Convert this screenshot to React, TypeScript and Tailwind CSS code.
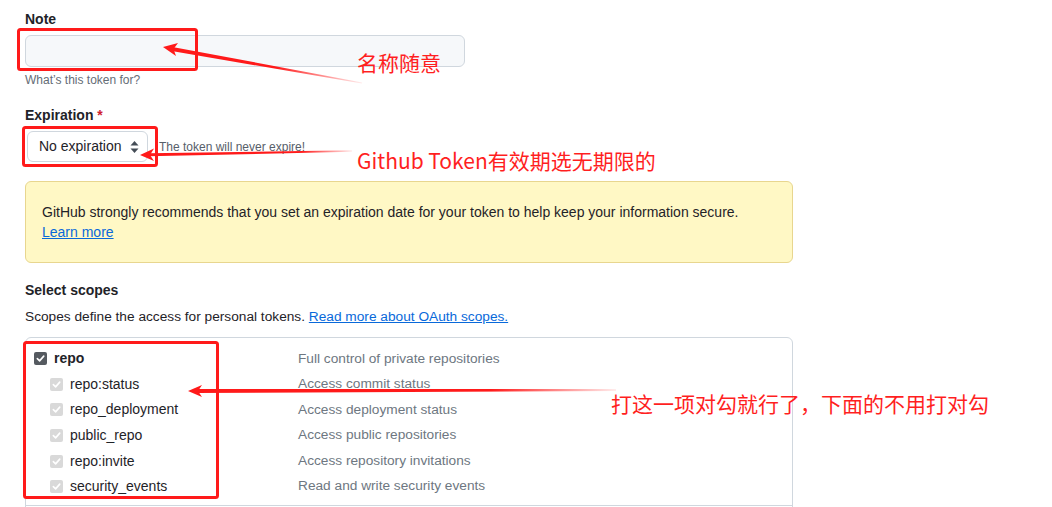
import React from "react";

const scopes = [
  { name: "repo", desc: "Full control of private repositories", main: true },
  { name: "repo:status", desc: "Access commit status" },
  { name: "repo_deployment", desc: "Access deployment status" },
  { name: "public_repo", desc: "Access public repositories" },
  { name: "repo:invite", desc: "Access repository invitations" },
  { name: "security_events", desc: "Read and write security events" },
];

function Check({ main }: { main?: boolean }) {
  return (
    <span
      className={
        main
          ? "flex h-[13px] w-[13px] items-center justify-center rounded-[2px] bg-[#555a60]"
          : "flex h-[13px] w-[13px] items-center justify-center rounded-[2px] bg-[#d9d9d9]"
      }
    >
      <svg width="9" height="9" viewBox="0 0 10 10">
        <path d="M1.5 5.2 L4 7.6 L8.6 2.4" fill="none" stroke="#fff" strokeWidth="1.8" strokeLinecap="round" strokeLinejoin="round" />
      </svg>
    </span>
  );
}

export default function App() {
  return (
    <div className="relative h-[507px] w-[1052px] overflow-hidden bg-white font-['Liberation_Sans',Arial,sans-serif] text-[#1f2328]">
      <div className="pl-[25px] pt-[9px]">
        <div className="text-[14px] font-bold leading-[20px]">Note</div>
        <div className="mt-[6px] h-[32px] w-[440px] rounded-[6px] border border-[#d0d7de] bg-[#f6f8fa]" />
        <div className="mt-[4px] text-[12px] leading-[18px] text-[#656d76]">What’s this token for?</div>

        <div className="mt-[16px] text-[14px] font-bold leading-[20px]">
          Expiration <span className="text-[#cf222e]">*</span>
        </div>
        <div className="mt-[6px] flex items-center">
          <div className="ml-[2px] flex h-[31px] w-[121px] items-center justify-between rounded-[6px] border border-[#d0d7de] bg-white pl-[11px] pr-[8px] text-[14px]">
            <span>No expiration</span>
            <svg width="9" height="14" viewBox="0 0 9 14">
              <path d="M4.5 1 L8.5 5.5 L0.5 5.5 Z" fill="#444c56" />
              <path d="M4.5 13 L8.5 8.5 L0.5 8.5 Z" fill="#444c56" />
            </svg>
          </div>
          <span className="ml-[11px] text-[12px] text-[#57606a]">The token will never expire!</span>
        </div>

        <div className="mt-[19px] w-[768px] rounded-[6px] border border-[#e8d68f] bg-[#fff8c5] px-[16px] py-[20px] text-[14px] leading-[20px]">
          <div>GitHub strongly recommends that you set an expiration date for your token to help keep your information secure.</div>
          <a className="text-[#0969da] underline">Learn more</a>
        </div>

        <div className="mt-[17px] text-[14px] font-bold leading-[20px]">Select scopes</div>
        <div className="mt-[7px] text-[13.7px] leading-[20px]">
          Scopes define the access for personal tokens.{" "}
          <a className="text-[#0969da] underline">Read more about OAuth scopes.</a>
        </div>

        <div className="mt-[10px] w-[768px] rounded-t-[6px] border border-[#d0d7de] pt-[8px]">
          <div className="border-b border-[#d0d7de] pb-[5px]">
            {scopes.map((s) => (
              <div key={s.name} className="grid h-[25.6px] grid-cols-[272px_1fr] items-center text-[14px]">
                <div className={s.main ? "flex items-center gap-[7px] pl-[8px]" : "flex items-center gap-[7px] pl-[24px]"}>
                  <Check main={s.main} />
                  <span className={s.main ? "font-bold" : ""}>{s.name}</span>
                </div>
                <div className="text-[13.7px] text-[#6e7781]">{s.desc}</div>
              </div>
            ))}
          </div>
          <div className="h-[20px]" />
        </div>
      </div>

      {/* annotation overlay */}
      <svg className="pointer-events-none absolute left-0 top-0" width="1052" height="507">
        <defs>
          <linearGradient id="g1" gradientUnits="userSpaceOnUse" x1="170" y1="49" x2="362" y2="83">
            <stop offset="0" stopColor="#ff1a1a" />
            <stop offset="0.55" stopColor="#ff1a1a" />
            <stop offset="1" stopColor="#ff1a1a" stopOpacity="0.08" />
          </linearGradient>
          <linearGradient id="g2" gradientUnits="userSpaceOnUse" x1="150" y1="155" x2="352" y2="151">
            <stop offset="0" stopColor="#ff1a1a" />
            <stop offset="0.75" stopColor="#ff1a1a" />
            <stop offset="1" stopColor="#ff1a1a" stopOpacity="0.08" />
          </linearGradient>
          <linearGradient id="g3" gradientUnits="userSpaceOnUse" x1="198" y1="391" x2="616" y2="390">
            <stop offset="0" stopColor="#ff1a1a" />
            <stop offset="0.7" stopColor="#ff1a1a" />
            <stop offset="1" stopColor="#ff1a1a" stopOpacity="0.08" />
          </linearGradient>
        </defs>
        <rect x="18.5" y="29.5" width="178" height="40" rx="2" fill="none" stroke="#ff1a1a" strokeWidth="3" />
        <rect x="23.5" y="127.5" width="133" height="38" rx="2" fill="none" stroke="#ff1a1a" strokeWidth="3" />
        <rect x="24.5" y="342.5" width="193" height="155" rx="2" fill="none" stroke="#ff1a1a" strokeWidth="3" />

        <polygon points="172.4,47 171.6,51 361.9,83.6 362.1,82.4" fill="url(#g1)" />
        <polygon points="163,47 178,43 173.5,49 176,56" fill="#ff1a1a" />

        <polygon points="148,153.3 148,156.3 352,151.8 352,150.2" fill="url(#g2)" />
        <polygon points="140,155 154,148.5 150,155 154,161" fill="#ff1a1a" />

        <polygon points="196,389 196,393 616,391 616,389" fill="url(#g3)" />
        <polygon points="188,391 202,385 198,391 202,397" fill="#ff1a1a" />
      </svg>

      <span className="absolute left-[357px] top-[48px] font-['Noto_Sans_CJK_SC',sans-serif] text-[21px] leading-[28px] text-[#ff1f1f]">名称随意</span>
      <span className="absolute left-[357px] top-[146px] font-['Noto_Sans_CJK_SC',sans-serif] text-[21px] leading-[28px] text-[#ff1f1f]">Github Token有效期选无期限的</span>
      <span className="absolute left-[611px] top-[389px] font-['Noto_Sans_CJK_SC',sans-serif] text-[21px] leading-[28px] text-[#ff1f1f]">打这一项对勾就行了，下面的不用打对勾</span>
    </div>
  );
}
